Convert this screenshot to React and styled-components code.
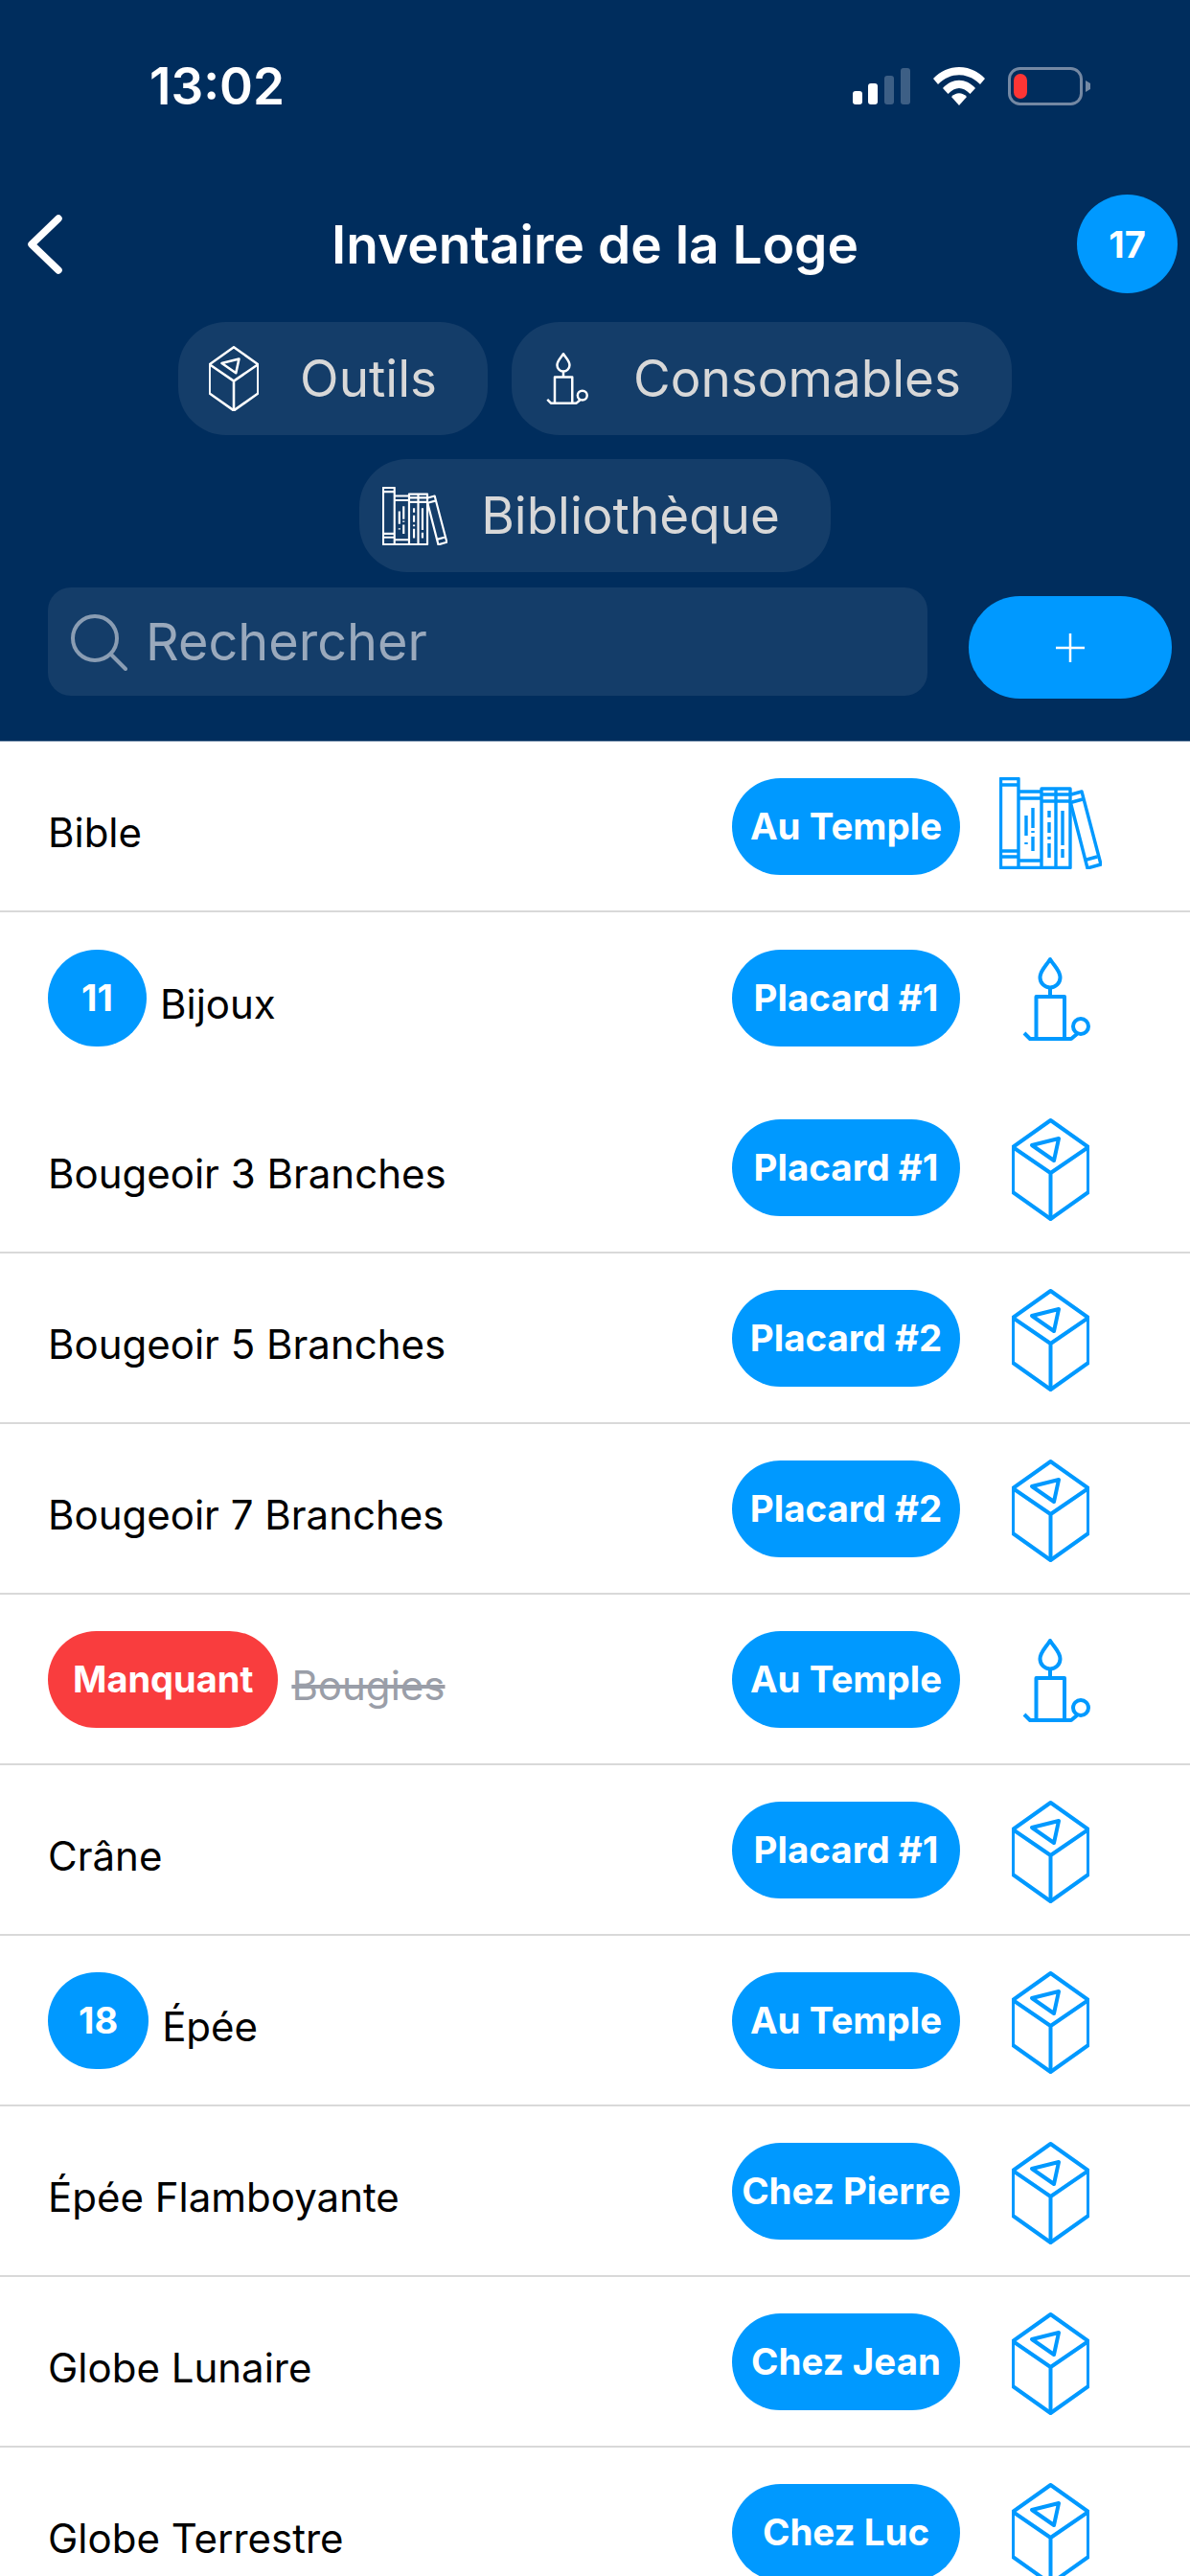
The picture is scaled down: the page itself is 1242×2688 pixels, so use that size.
import styled, { createGlobalStyle } from 'styled-components'

const GlobalStyle = createGlobalStyle`
  html, body {
    margin: 0;
    padding: 0;
    background: #fff;
  }
  * {
    box-sizing: border-box;
  }
`

const Page = styled.div`
  width: 1242px;
  height: 2688px;
  overflow: hidden;
  background: #fff;
  font-family: Inter, "Noto Sans", "Liberation Sans", sans-serif;
`

const Header = styled.header`
  height: 774px;
  background: #002d5d;
  border-bottom: 1px solid #8fa3ba;
`

const StatusBar = styled.div`
  height: 180px;
  margin-bottom: 22px;
  padding: 0 103px 0 156px;
  display: flex;
  align-items: center;
  justify-content: space-between;
`

const Time = styled.span`
  font-size: 53px;
  font-weight: 600;
  color: #fff;
`

const StatusIcons = styled.div`
  display: flex;
  align-items: center;
  gap: 24px;
`

const Nav = styled.div`
  height: 105px;
  padding: 0 13px;
  display: grid;
  grid-template-columns: 1fr auto 1fr;
  align-items: center;
`

const BackGlyph = styled.svg`
  margin-left: 15px;
`

const Title = styled.h1`
  margin: 0;
  font-size: 55px;
  font-weight: 600;
  color: #fff;
`

const NavBadge = styled.span`
  justify-self: end;
  width: 105px;
  height: 103px;
  border-radius: 50%;
  background: #0099ff;
  color: #fff;
  font-size: 38px;
  font-weight: 700;
  display: flex;
  align-items: center;
  justify-content: center;
`

const Chips = styled.div`
  margin-top: 29px;
  display: flex;
  flex-wrap: wrap;
  justify-content: center;
  gap: 25px;
`

const Chip = styled.div`
  height: 118px;
  padding: 0 53px 0 16px;
  border-radius: 50px;
  background: #143d69;
  color: #d8d8d8;
  font-size: 53px;
  display: flex;
  align-items: center;
  gap: 27px;
`

const ChipIcon = styled.span`
  width: 84px;
  display: flex;
  justify-content: center;
`

const SearchRow = styled.div`
  margin-top: 16px;
  padding: 0 19px 0 50px;
  display: flex;
  align-items: flex-start;
  gap: 43px;
`

const SearchBox = styled.label`
  flex: 1;
  min-width: 0;
  height: 113px;
  padding-left: 23px;
  border-radius: 24px;
  background: #143d69;
  display: flex;
  align-items: center;
  gap: 19px;
`

const SearchInput = styled.input`
  flex: 1;
  min-width: 0;
  border: 0;
  padding: 0;
  outline: 0;
  background: transparent;
  font-family: inherit;
  font-size: 54px;
  color: #fff;

  &::placeholder {
    color: #9aa9bc;
    opacity: 1;
  }
`

const AddButton = styled.button`
  flex: none;
  width: 212px;
  height: 107px;
  margin-top: 9px;
  border: 0;
  padding: 0;
  border-radius: 54px;
  background: #0099ff;
  display: flex;
  align-items: center;
  justify-content: center;
`

const Row = styled.div`
  height: 178px;
  padding: 0 52px 0 50px;
  display: flex;
  align-items: center;
  border-bottom: ${props => (props.$plain ? 'none' : '2px solid #d9d9d9')};
`

const NameCell = styled.div`
  flex: 1;
  min-width: 0;
  display: flex;
  align-items: center;
  gap: 14px;
`

const Name = styled.span`
  margin-top: 13px;
  font-size: 42px;
  color: ${props => (props.$missing ? '#9a9ea8' : '#000')};
  text-decoration: ${props => (props.$missing ? 'line-through' : 'none')};
`

const CountBadge = styled.span`
  height: 101px;
  min-width: 103px;
  padding: 0 ${props => (props.$danger ? '26px' : '32px')};
  border-radius: 51px;
  background: ${props => (props.$danger ? '#f93d3e' : '#0099ff')};
  color: #fff;
  font-size: 38px;
  font-weight: 700;
  display: flex;
  align-items: center;
  justify-content: center;
`

const Place = styled.span`
  width: 238px;
  height: 101px;
  border-radius: 51px;
  background: #0099ff;
  color: #fff;
  font-size: 38.500px;
  font-weight: 700;
  white-space: nowrap;
  display: flex;
  align-items: center;
  justify-content: center;
`

// the candle sits a bit right of the other icons, the books a bit higher
const TypeCell = styled.div`
  width: 188px;
  display: flex;
  justify-content: center;
  padding-left: ${props => (props.$type === 'supply' ? '12px' : '0')};
  margin-top: ${props => (props.$type === 'book' ? '-6px' : '4px')};
`

function BackIcon () {
  return (
    <BackGlyph width="38" height="62" viewBox="0 0 38 62" fill="none" stroke="#fff" strokeWidth="7.500" strokeLinecap="round" strokeLinejoin="round">
      <path d="M33 4 L5 31 L33 58" />
    </BackGlyph>
  )
}

function SignalIcon () {
  return (
    <svg width="60" height="38" viewBox="0 0 60 38">
      <rect x="0" y="24" width="10" height="14" rx="3" fill="#fff" />
      <rect x="16" y="16" width="10" height="22" rx="3" fill="#fff" />
      <rect x="33" y="8" width="10" height="30" rx="3" fill="#3d5f85" />
      <rect x="50" y="0" width="10" height="38" rx="3" fill="#3d5f85" />
    </svg>
  )
}

function WifiIcon () {
  return (
    <svg width="54" height="40" viewBox="0 0 54 40" fill="#fff">
      <path d="M0 12 C15 -4 39 -4 54 12 L49 18 C36 5 18 5 5 18 Z" />
      <path d="M10 22 C20 11 34 11 44 22 L38.500 28 C31 20 23 20 15.500 28 Z" />
      <path d="M19 31 C24 26 30 26 35 31 L27 40 Z" />
    </svg>
  )
}

function BatteryIcon () {
  return (
    <svg width="87" height="40" viewBox="0 0 87 40" fill="none">
      <rect x="1.500" y="1.500" width="75" height="37" rx="11" stroke="#7488a3" strokeWidth="3" />
      <rect x="6" y="7" width="14" height="26" rx="7" fill="#fd3535" />
      <path d="M81 14 L86 17 V23 L81 26 Z" fill="#7488a3" />
    </svg>
  )
}

function SearchIcon () {
  return (
    <svg width="60" height="60" viewBox="0 0 60 60" fill="none" stroke="#8a9db3" strokeWidth="4" strokeLinecap="round">
      <circle cx="26" cy="26" r="23" />
      <path d="M43 43 L58 58" />
    </svg>
  )
}

function PlusIcon () {
  return (
    <svg width="30" height="30" viewBox="0 0 30 30" stroke="#fff" strokeWidth="2.500">
      <path d="M15 0 V30 M0 15 H30" />
    </svg>
  )
}

function CubeIcon ({ width = 81, color = '#0099ff' }) {
  return (
    <svg width={width} viewBox="0 0 81 107" fill="none" stroke={color} strokeWidth="4" strokeLinejoin="round">
      <path d="M40.500 2 L80 30 V77 L40.500 105 L1 77 V30 Z" />
      <path d="M1 30 L40.500 57 L80 30 M40.500 57 V105" />
      <path d="M21 28 L49 21 L44 44 Z" />
    </svg>
  )
}

function CandleIcon ({ width = 71, color = '#0099ff' }) {
  return (
    <svg width={width} viewBox="0 0 71 88" fill="none" stroke={color} strokeWidth="4" strokeLinejoin="round">
      <path d="M29 2 C24 10 18.500 14 18.500 21 A10.500 10.500 0 0 0 39.500 21 C39.500 14 34 10 29 2 Z" />
      <path d="M29 31.500 V41 M14.500 85 V41 H44 V85" />
      <path d="M2 79 L8 85 H51 L57 80" />
      <circle cx="61" cy="72" r="8" />
    </svg>
  )
}

function BooksIcon ({ width = 107, color = '#0099ff' }) {
  return (
    <svg width={width} viewBox="0 0 107 96" fill="none" stroke={color} strokeWidth="3.400" strokeLinejoin="round">
      <path d="M1.500 1.500 H20 V94.500 H1.500 Z M1.500 8 H20 M1.500 77 H20 M1.500 83 H20" />
      <path d="M20 15 H44 M20 22 H44 M20 87 H44 M20 94.500 H44" />
      <path d="M44 94.500 V12 H74 V94.500 H44 M59 12 V94.500 M44 18 H74 M44 25 H74" />
      <path d="M28 40 V61 M28 68 V70 M35 32 V53 M35 56 V58 M35 62 V77" />
      <path d="M52 35 V42 M52 47 V58 M52 62 V65 M52 69 V84 M66 35 V71 M66 75 V84" />
      <path d="M75 18 L86 15 L106 91 L92 95 L74 25 M76 26 L87 23 M91 86 L102 83" />
    </svg>
  )
}

const typeIcons = {
  tool: CubeIcon,
  supply: CandleIcon,
  book: BooksIcon
}

const items = [
  { name: 'Bible', place: 'Au Temple', type: 'book' },
  { name: 'Bijoux', count: 11, place: 'Placard #1', type: 'supply', plain: true },
  { name: 'Bougeoir 3 Branches', place: 'Placard #1', type: 'tool' },
  { name: 'Bougeoir 5 Branches', place: 'Placard #2', type: 'tool' },
  { name: 'Bougeoir 7 Branches', place: 'Placard #2', type: 'tool' },
  { name: 'Bougies', missing: true, place: 'Au Temple', type: 'supply' },
  { name: 'Crâne', place: 'Placard #1', type: 'tool' },
  { name: 'Épée', count: 18, place: 'Au Temple', type: 'tool' },
  { name: 'Épée Flamboyante', place: 'Chez Pierre', type: 'tool' },
  { name: 'Globe Lunaire', place: 'Chez Jean', type: 'tool' },
  { name: 'Globe Terrestre', place: 'Chez Luc', type: 'tool' }
]

function ItemRow ({ item }) {
  const TypeIcon = typeIcons[item.type]

  return (
    <Row $plain={item.plain}>
      <NameCell>
        {item.count && <CountBadge>{item.count}</CountBadge>}
        {item.missing && <CountBadge $danger>Manquant</CountBadge>}
        <Name $missing={item.missing}>{item.name}</Name>
      </NameCell>
      <Place>{item.place}</Place>
      <TypeCell $type={item.type}><TypeIcon /></TypeCell>
    </Row>
  )
}

function App () {
  return (
    <Page>
      <GlobalStyle />
      <Header>
        <StatusBar>
          <Time>13:02</Time>
          <StatusIcons>
            <SignalIcon />
            <WifiIcon />
            <BatteryIcon />
          </StatusIcons>
        </StatusBar>
        <Nav>
          <BackIcon />
          <Title>Inventaire de la Loge</Title>
          <NavBadge>17</NavBadge>
        </Nav>
        <Chips>
          <Chip><ChipIcon><CubeIcon width={52} color="#fff" /></ChipIcon>Outils</Chip>
          <Chip><ChipIcon><CandleIcon width={44} color="#fff" /></ChipIcon>Consomables</Chip>
          <Chip><ChipIcon><BooksIcon width={68} color="#fff" /></ChipIcon>Bibliothèque</Chip>
        </Chips>
        <SearchRow>
          <SearchBox>
            <SearchIcon />
            <SearchInput placeholder="Rechercher" />
          </SearchBox>
          <AddButton aria-label="Ajouter"><PlusIcon /></AddButton>
        </SearchRow>
      </Header>
      {items.map(item => <ItemRow key={item.name} item={item} />)}
    </Page>
  )
}

export default App
